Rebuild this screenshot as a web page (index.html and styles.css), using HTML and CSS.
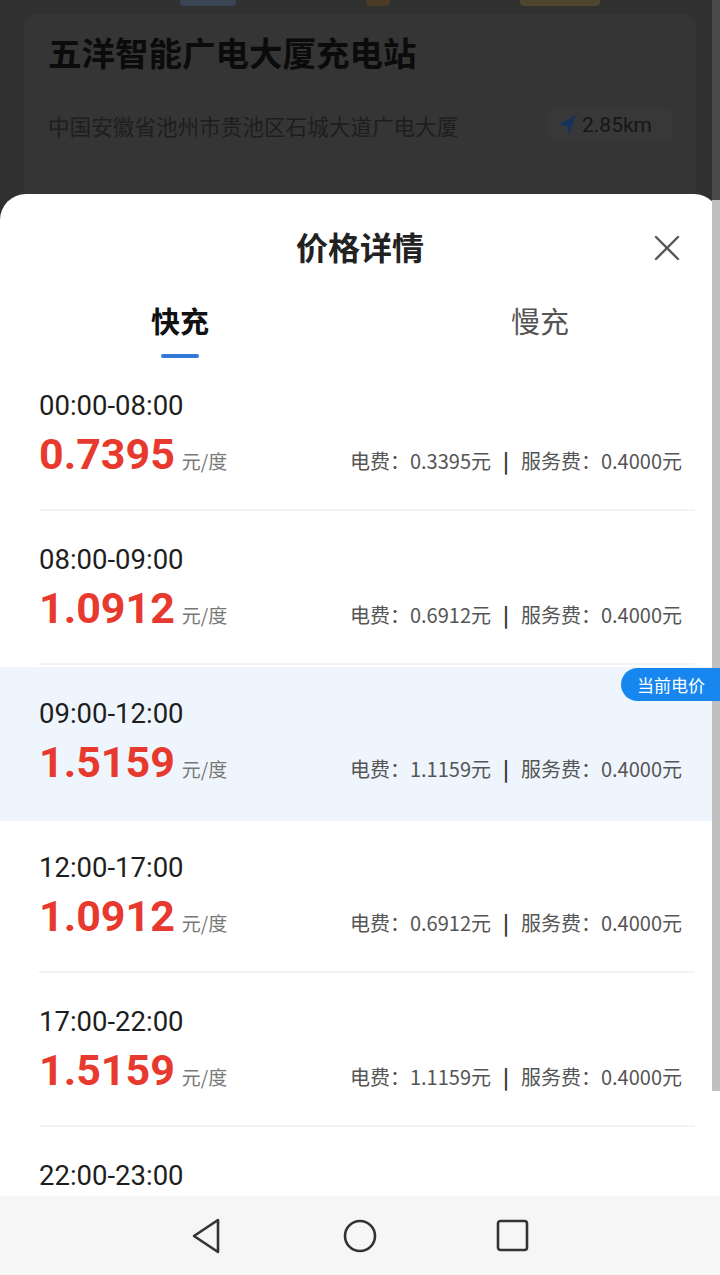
FILE: index.html
```html
<!DOCTYPE html>
<html>
<head>
	<meta charset="utf-8">
	<title>价格详情</title>
	<link rel="stylesheet" href="styles.css">
</head>
<body>

<div id="page">

	<!-- dimmed station card behind the sheet -->
	<div class="backdrop">
		<div class="thumbs">
			<span class="thumb t1"></span>
			<span class="thumb t2"></span>
			<span class="thumb t3"></span>
		</div>
		<div class="stationCard">
			<h1>五洋智能广电大厦充电站</h1>
			<div class="addrRow">
				<p>中国安徽省池州市贵池区石城大道广电大厦</p>
				<div class="distance">
					<svg width="22" height="24" viewBox="0 0 22 24"><path d="M20 2 L2 12 L11 13 L13 22 Z" fill="#17335c"/></svg>
					<span>2.85km</span>
				</div>
			</div>
		</div>
	</div>

	<!-- price sheet -->
	<div class="sheet">
		<div class="sheetHead">
			<h2>价格详情</h2>
			<svg class="close" width="26" height="26" viewBox="0 0 26 26"><path d="M2 2 L24 24 M24 2 L2 24" stroke="#555" stroke-width="2.4" stroke-linecap="round"/></svg>
		</div>
		<div class="tabs">
			<div class="tab active">快充<i></i></div>
			<div class="tab">慢充</div>
		</div>

		<div class="list">
			<div class="row">
				<div class="inner">
					<div class="time">00:00-08:00</div>
					<div class="priceLine">
						<span class="price">0.7395</span><span class="unit">元/度</span>
						<span class="fees">电费：0.3395元<b>|</b>服务费：0.4000元</span>
					</div>
				</div>
			</div>
			<div class="row">
				<div class="inner">
					<div class="time">08:00-09:00</div>
					<div class="priceLine">
						<span class="price">1.0912</span><span class="unit">元/度</span>
						<span class="fees">电费：0.6912元<b>|</b>服务费：0.4000元</span>
					</div>
				</div>
			</div>
			<div class="row current">
				<span class="badge">当前电价</span>
				<div class="inner">
					<div class="time">09:00-12:00</div>
					<div class="priceLine">
						<span class="price">1.5159</span><span class="unit">元/度</span>
						<span class="fees">电费：1.1159元<b>|</b>服务费：0.4000元</span>
					</div>
				</div>
			</div>
			<div class="row">
				<div class="inner">
					<div class="time">12:00-17:00</div>
					<div class="priceLine">
						<span class="price">1.0912</span><span class="unit">元/度</span>
						<span class="fees">电费：0.6912元<b>|</b>服务费：0.4000元</span>
					</div>
				</div>
			</div>
			<div class="row">
				<div class="inner">
					<div class="time">17:00-22:00</div>
					<div class="priceLine">
						<span class="price">1.5159</span><span class="unit">元/度</span>
						<span class="fees">电费：1.1159元<b>|</b>服务费：0.4000元</span>
					</div>
				</div>
			</div>
			<div class="row">
				<div class="inner">
					<div class="time">22:00-23:00</div>
				</div>
			</div>
		</div>
	</div>

	<!-- system nav bar -->
	<div class="navBar">
		<svg width="34" height="38" viewBox="0 0 34 38"><path d="M28 3 L28 35 L4 19 Z" fill="none" stroke="#333" stroke-width="2.6" stroke-linejoin="round"/></svg>
		<svg width="34" height="34" viewBox="0 0 34 34"><circle cx="17" cy="17" r="15" fill="none" stroke="#333" stroke-width="2.6"/></svg>
		<svg width="34" height="34" viewBox="0 0 34 34"><rect x="2" y="2" width="29" height="29" rx="2.5" fill="none" stroke="#333" stroke-width="2.6"/></svg>
	</div>

	<div class="scrollThumb"></div>
</div>

</body>
</html>
```

FILE: styles.css
```css
body {
	margin: 0;
	font-family: 'Noto Sans CJK SC', 'Noto Sans', sans-serif;
	background: #303030;
}

#page {
	position: relative;
	width: 720px;
	height: 1275px;
	overflow: hidden;
	display: flex;
	flex-direction: column;
}

/* ---------- dimmed backdrop ---------- */
.backdrop {
	height: 194px;
	flex-shrink: 0;
	background: #313131;
	display: flex;
	flex-direction: column;
}
.thumbs {
	height: 8px;
	flex-shrink: 0;
	display: flex;
	padding-left: 180px;
	gap: 130px;
}
.thumb {
	display: block;
	height: 6px;
	border-radius: 0 0 4px 4px;
}
.thumb.t1 { width: 56px; background: #3b4452; }
.thumb.t2 { width: 24px; background: #4a3a26; }
.thumb.t3 { width: 80px; background: #4f4630; }

.stationCard {
	flex: 1;
	margin: 6px 24px 0 24px;
	background: #353535;
	border-radius: 14px 14px 0 0;
	padding: 16px 24px 0 24px;
}
.stationCard h1 {
	margin: 0;
	font-size: 33.5px;
	line-height: 44px;
	font-weight: 700;
	color: #0b0b0b;
}
.addrRow {
	display: flex;
	align-items: center;
	justify-content: space-between;
	margin-top: 35px;
}
.addrRow p {
	margin: 0;
	font-size: 21.6px;
	color: #1e1e1e;
}
.distance {
	display: flex;
	align-items: center;
	gap: 4px;
	padding: 4px 20px 4px 8px;
	background: #383838;
	border-radius: 6px;
	font-family: 'Roboto', sans-serif;
	font-size: 21px;
	color: #161616;
}

/* ---------- sheet ---------- */
.sheet {
	flex: 1;
	min-height: 0;
	background: #fff;
	border-radius: 26px 26px 0 0;
	overflow: hidden;
	display: flex;
	flex-direction: column;
}
.sheetHead {
	position: relative;
	height: 104px;
	flex-shrink: 0;
	display: flex;
	justify-content: center;
}
.sheetHead h2 {
	margin: 30px 0 0 0;
	font-size: 32px;
	line-height: 44px;
	font-weight: 700;
	color: #222;
}
.close {
	position: absolute;
	right: 40px;
	top: 41px;
}

.tabs {
	display: flex;
	height: 61px;
	flex-shrink: 0;
}
.tab {
	flex: 1;
	display: flex;
	flex-direction: column;
	align-items: center;
	font-size: 29px;
	line-height: 44px;
	color: #555;
}
.tab.active {
	font-weight: 700;
	color: #111;
}
.tab i {
	display: block;
	width: 38px;
	height: 4px;
	margin-top: 12px;
	border-radius: 2px;
	background: #3079d6;
}

.list {
	display: flex;
	flex-direction: column;
	flex-shrink: 0;
}
.row {
	position: relative;
	height: 154px;
	flex-shrink: 0;
}
.row.current {
	background: #eff5fd;
}
.inner {
	height: 152px;
	margin: 0 25px 0 39px;
	padding-top: 30px;
	box-sizing: border-box;
	border-bottom: 2px solid #f3f3f3;
}
.row.current .inner {
	border-bottom-color: #eff5fd;
}
.time {
	font-family: 'Roboto', sans-serif;
	font-size: 27.5px;
	line-height: 34px;
	color: #1e1e1e;
}
.priceLine {
	display: flex;
	align-items: baseline;
	margin-top: 5px;
	padding-right: 13px;
}
.price {
	font-family: 'Roboto', sans-serif;
	font-weight: 700;
	font-size: 43px;
	line-height: 52px;
	color: #e8392f;
}
.unit {
	margin-left: 7px;
	font-size: 19px;
	color: #777;
}
.fees {
	margin-left: auto;
	font-size: 20px;
	color: #555;
}
.fees b {
	margin: 0 12px;
	font-weight: 700;
	color: #333;
}

.badge {
	position: absolute;
	top: 1px;
	right: 0;
	z-index: 2;
	height: 33px;
	padding: 0 15px 0 16px;
	border-radius: 17px 0 0 17px;
	background: #1787ef;
	color: #fff;
	font-size: 17px;
	line-height: 33px;
}

/* ---------- nav bar ---------- */
.navBar {
	height: 79px;
	flex-shrink: 0;
	background: #f6f6f6;
	display: flex;
	align-items: center;
	justify-content: center;
	gap: 119px;
}

.scrollThumb {
	position: absolute;
	top: 0;
	right: 0;
	width: 8px;
	height: 1091px;
	background: linear-gradient(#4a4a4a 0, #4a4a4a 200px, #c0c0c0 200px);
	z-index: 1;
}
```
